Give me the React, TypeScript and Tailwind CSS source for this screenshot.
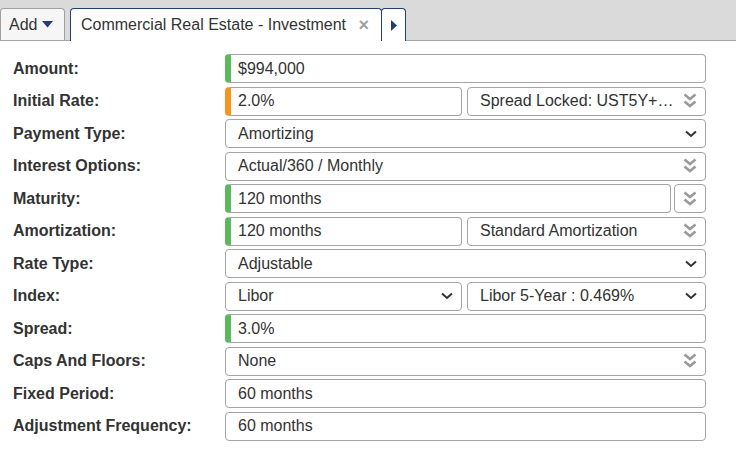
import React from "react";

const font = { fontFamily: '"Liberation Sans", Arial, sans-serif' };

function DoubleChevron() {
  return (
    <svg width="14" height="16" viewBox="0 0 14 16" className="shrink-0">
      <path d="M1.5 1.5 L7 6 L12.5 1.5" fill="none" stroke="#9a9a9a" strokeWidth="2.6" />
      <path d="M1.5 8.5 L7 13 L12.5 8.5" fill="none" stroke="#9a9a9a" strokeWidth="2.6" />
    </svg>
  );
}

function Chevron() {
  return (
    <svg width="12" height="8" viewBox="0 0 12 8" className="shrink-0">
      <path d="M1 1.5 L6 6 L11 1.5" fill="none" stroke="#333" strokeWidth="2" />
    </svg>
  );
}

type FieldProps = {
  value: string;
  stripe?: "green" | "orange";
  icon?: "double" | "single";
  className?: string;
};

function Field({ value, stripe, icon, className = "" }: FieldProps) {
  const stripeCls =
    stripe === "green"
      ? "border-l-[6px] border-l-[#5cb85c] pl-[7px]"
      : stripe === "orange"
        ? "border-l-[6px] border-l-[#f7941d] pl-[7px]"
        : "pl-[12px]";
  return (
    <div
      className={`flex h-full min-w-0 items-center rounded-[4px] border border-[#a5a5a5] bg-white pr-[8px] text-[16px] text-[#333] ${stripeCls} ${className}`}
    >
      <span className="min-w-0 flex-1 whitespace-nowrap">{value}</span>
      {icon === "double" && <DoubleChevron />}
      {icon === "single" && <Chevron />}
    </div>
  );
}

function Row({ label, children }: { label: string; children: React.ReactNode }) {
  return (
    <div className="flex h-[29px] items-center">
      <div className="w-[212px] shrink-0 text-[16px] font-bold text-[#333]">{label}</div>
      <div className="flex h-full w-[481px] gap-[5px]">{children}</div>
    </div>
  );
}

export default function App() {
  return (
    <div className="h-[455px] w-[736px] overflow-hidden bg-white" style={font}>
      <div className="flex h-[41px] items-end gap-[5px] border-b border-[#a5a5a5] bg-[#dadada]">
        <div className="flex h-[32px] w-[65px] items-center gap-[5px] rounded-t-[4px] border border-b-0 border-[#a0a0a0] bg-[#f6f6f6] pl-[8px] text-[16px] text-[#333]">
          Add
          <svg width="11" height="7" viewBox="0 0 11 7">
            <path d="M0 0 H11 L5.5 6.5 Z" fill="#213f73" />
          </svg>
        </div>
        <div className="-mb-px flex h-[33px] items-center">
          <div className="flex h-full w-[312px] items-center justify-between rounded-t-[4px] border border-b-0 border-[#213f73] bg-white pl-[10px] pr-[12px] text-[16px] text-[#333]">
            <span>Commercial Real Estate - Investment</span>
            <span className="text-[18px] font-bold leading-none text-[#a0a0a0]">×</span>
          </div>
          <div className="-ml-px flex h-full w-[25px] items-center justify-center rounded-t-[4px] border border-b-0 border-[#213f73] bg-white">
            <svg width="6" height="11" viewBox="0 0 6 11">
              <path d="M0 0 L6 5.5 L0 11 Z" fill="#213f73" />
            </svg>
          </div>
        </div>
      </div>

      <div className="flex flex-col gap-[3.5px] pl-[13px] pt-[13px]">
        <Row label="Amount:">
          <Field value="$994,000" stripe="green" className="flex-1" />
        </Row>
        <Row label="Initial Rate:">
          <Field value="2.0%" stripe="orange" className="w-[237px]" />
          <Field value="Spread Locked: UST5Y+…" icon="double" className="flex-1" />
        </Row>
        <Row label="Payment Type:">
          <Field value="Amortizing" icon="single" className="flex-1" />
        </Row>
        <Row label="Interest Options:">
          <Field value="Actual/360 / Monthly" icon="double" className="flex-1" />
        </Row>
        <Row label="Maturity:">
          <Field value="120 months" stripe="green" className="flex-1" />
          <div className="-ml-[2px] flex h-full w-[32px] items-center justify-center rounded-[4px] border border-[#a5a5a5] bg-white">
            <DoubleChevron />
          </div>
        </Row>
        <Row label="Amortization:">
          <Field value="120 months" stripe="green" className="w-[237px]" />
          <Field value="Standard Amortization" icon="double" className="flex-1" />
        </Row>
        <Row label="Rate Type:">
          <Field value="Adjustable" icon="single" className="flex-1" />
        </Row>
        <Row label="Index:">
          <Field value="Libor" icon="single" className="w-[237px]" />
          <Field value="Libor 5-Year : 0.469%" icon="single" className="flex-1" />
        </Row>
        <Row label="Spread:">
          <Field value="3.0%" stripe="green" className="flex-1" />
        </Row>
        <Row label="Caps And Floors:">
          <Field value="None" icon="double" className="flex-1" />
        </Row>
        <Row label="Fixed Period:">
          <Field value="60 months" className="flex-1" />
        </Row>
        <Row label="Adjustment Frequency:">
          <Field value="60 months" className="flex-1" />
        </Row>
      </div>
    </div>
  );
}
